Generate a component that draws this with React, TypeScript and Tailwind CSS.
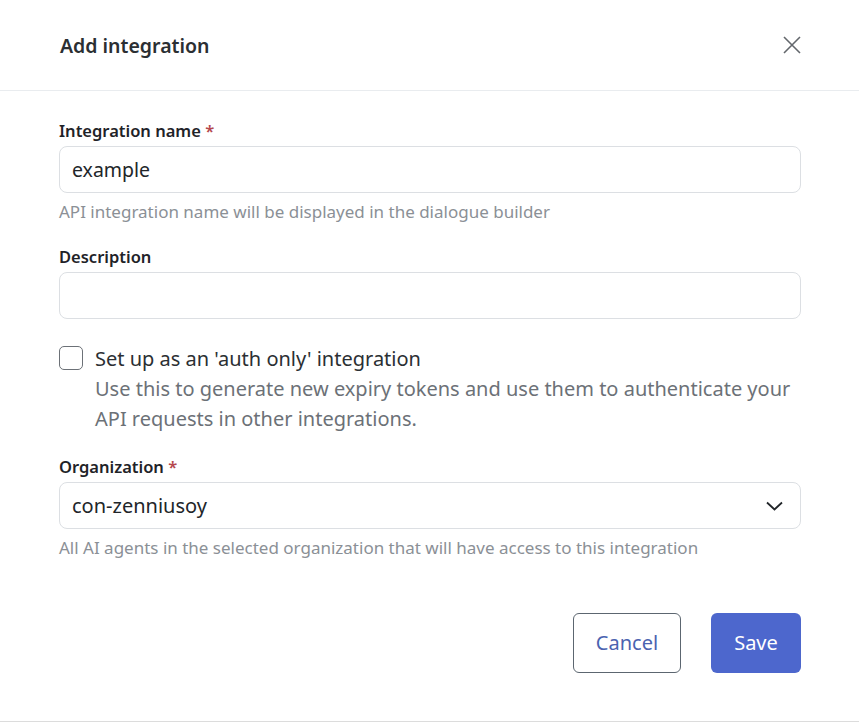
export default function App() {
  return (
    <div className="w-[859px] h-[722px] bg-white font-['Noto_Sans',sans-serif] text-[#212529] border-b border-[#dcdcdc]">
      {/* Header */}
      <div className="h-[91px] flex items-center justify-between pl-[60px] pr-[58px] border-b border-[#e9ecef]">
        <h2 className="text-[19.5px] font-semibold text-[#2b2f33] mt-[2px]">Add integration</h2>
        <button className="text-[#63676c] -mt-[1px]">
          <svg width="18" height="18" viewBox="0 0 18 18" fill="none" stroke="currentColor" strokeWidth="1.6">
            <path d="M1 1 L17 17 M17 1 L1 17" />
          </svg>
        </button>
      </div>

      {/* Body */}
      <div className="pl-[59px] pr-[58px] pt-[28px]">
        <label className="block text-[16.5px] font-semibold text-[#1f2328] leading-[24px] mb-[3px]">
          Integration name <span className="text-[#b5484e]">*</span>
        </label>
        <input
          defaultValue="example"
          className="w-full h-[47px] rounded-[8px] border border-[#dcdfe3] px-[12px] text-[19.5px] text-[#212529] outline-none"
        />
        <p className="mt-[8px] text-[17px] text-[#8b9096] leading-[22px]">
          API integration name will be displayed in the dialogue builder
        </p>

        <label className="block mt-[22px] text-[16.5px] font-semibold text-[#1f2328] leading-[24px] mb-[3px]">
          Description
        </label>
        <input className="w-full h-[47px] rounded-[8px] border border-[#dcdfe3] px-[12px] text-[19.5px] outline-none" />

        <div className="flex items-start gap-[12px] mt-[27px]">
          <div className="w-[24px] h-[24px] rounded-[5px] border border-[#6c7177] shrink-0" />
          <div className="text-[20px] leading-[30px] -mt-[2px]">
            <div className="text-[#2b2f33]">Set up as an 'auth only' integration</div>
            <div className="text-[#6c7177]">
              Use this to generate new expiry tokens and use them to authenticate your API requests in other integrations.
            </div>
          </div>
        </div>

        <label className="block mt-[21px] text-[16.5px] font-semibold text-[#1f2328] leading-[24px] mb-[3px]">
          Organization <span className="text-[#b5484e]">*</span>
        </label>
        <div className="w-full h-[47px] rounded-[8px] border border-[#dcdfe3] pl-[12px] pr-[17px] flex items-center justify-between text-[20px]">
          <span>con-zenniusoy</span>
          <svg width="17" height="10" viewBox="0 0 17 10" fill="none" stroke="#212529" strokeWidth="1.8">
            <path d="M1 1.5 L8.5 8.5 L16 1.5" />
          </svg>
        </div>
        <p className="mt-[8px] text-[17px] text-[#8b9096] leading-[22px]">
          All AI agents in the selected organization that will have access to this integration
        </p>

        <div className="flex justify-end gap-[30px] mt-[54px]">
          <button className="w-[108px] h-[60px] rounded-[6px] border border-[#5c6670] text-[#4b63b0] text-[20px]">
            Cancel
          </button>
          <button className="w-[90px] h-[60px] rounded-[6px] bg-[#4d67cd] text-white text-[20px]">
            Save
          </button>
        </div>
      </div>
    </div>
  );
}
